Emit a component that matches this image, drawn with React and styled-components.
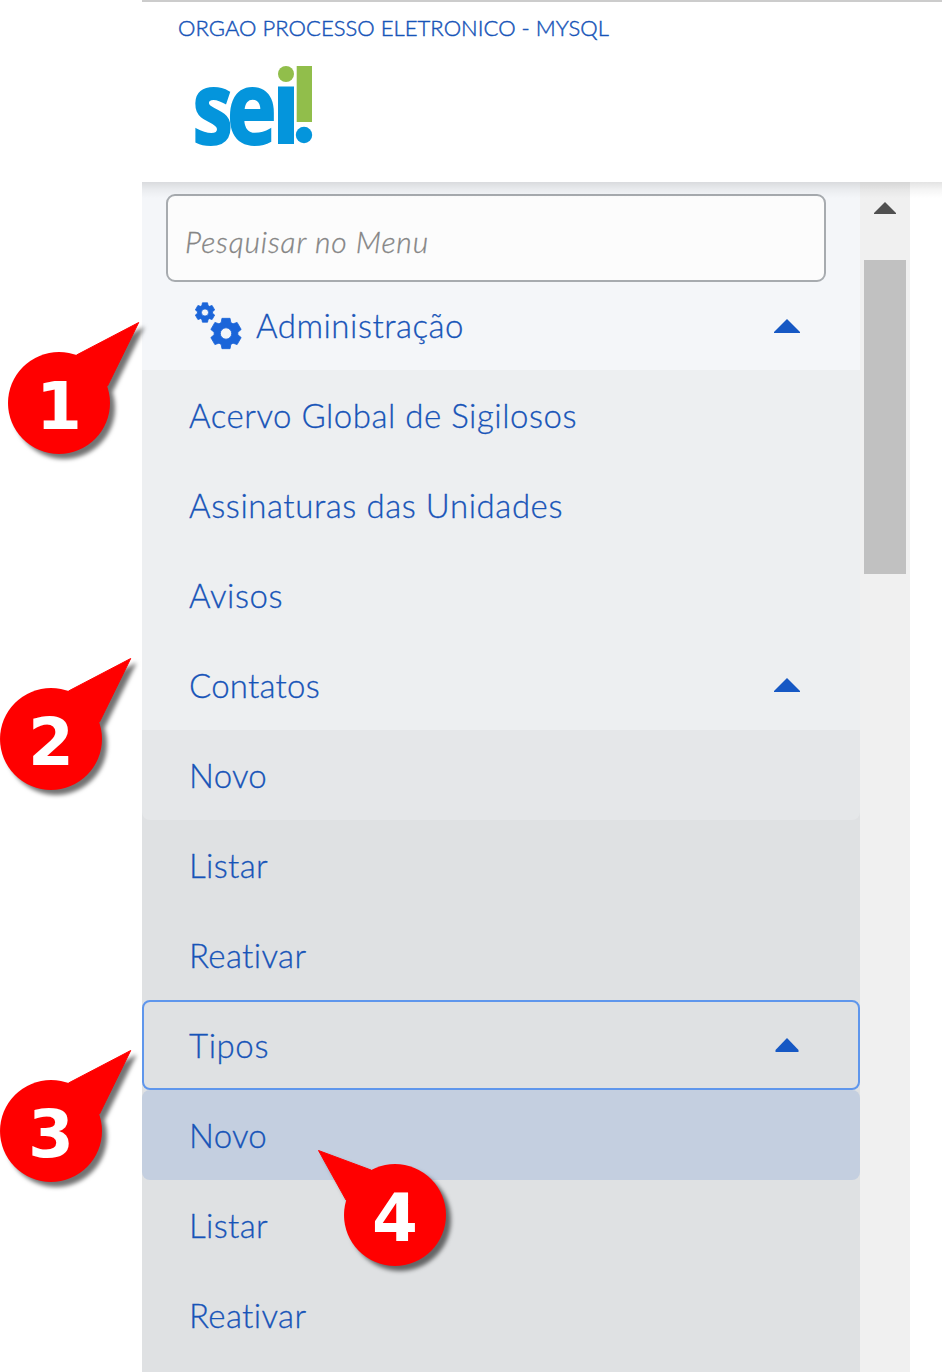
import React, { useLayoutEffect, useRef, useState } from "react";
import styled, { createGlobalStyle } from "styled-components";

const GlobalStyle = createGlobalStyle`
  * { box-sizing: border-box; }
  body { margin: 0; background: #fff; overflow: hidden; }
`;

const Page = styled.div`
  position: relative;
  display: flex;
  flex-direction: column;
  width: 942px;
  height: 1372px;
  padding-left: 142px;
  overflow: hidden;
  background: #fff;
  font-family: Lato, "Open Sans", sans-serif;
  color: #1754b8;
`;

const Header = styled.header`
  flex: none;
  height: 182px;
  border-top: 2px solid #ccc;
  padding: 13px 36px 0;
`;

const OrgName = styled.div`
  font-size: 22px;
  font-weight: 300;
  line-height: 26px;
`;

const Logo = styled.svg`
  display: block;
  margin: 19px 0 0 12px;
  overflow: visible;
`;

const Body = styled.div`
  position: relative;
  display: flex;
  flex: 1;
  min-height: 0;
`;

const HeaderShadow = styled.div`
  position: absolute;
  inset: 0 0 auto;
  height: 16px;
  background: linear-gradient(rgba(0, 0, 0, 0.11), rgba(0, 0, 0, 0.04) 50%, rgba(0, 0, 0, 0));
`;

const Menu = styled.nav`
  display: flex;
  flex-direction: column;
  width: 718px;
  padding-top: 12px;
  background: #f4f6f9;
`;

const SearchField = styled.div`
  flex: none;
  display: flex;
  align-items: center;
  height: 88px;
  margin: 0 34px 0 24px;
  padding: 6px 0 0 17px;
  border: 2px solid #a7abaf;
  border-radius: 9px;
  background: #fcfcfc;
  color: #858585;
  font-size: 30px;
  font-style: italic;
  font-weight: 300;
`;

const Group = styled.div`
  background: ${(p) => p.$bg};
`;

const LastGroup = styled(Group)`
  flex: 1;
`;

const Row = styled.div`
  display: flex;
  align-items: center;
  justify-content: space-between;
  height: ${(p) => p.$height || 90}px;
  padding: 0 ${(p) => (p.$outlined ? 58 : 60)}px 0 ${(p) => (p.$outlined ? 45 : 47)}px;
  border: ${(p) => (p.$outlined ? "2px solid #5f96ec" : "none")};
  border-radius: ${(p) => p.$radius || 0};
  background: ${(p) => p.$bg || "transparent"};
  font-size: 33px;
  font-weight: 300;
`;

const RowTitle = styled.div`
  display: flex;
  align-items: center;
  gap: 14px;
  padding-left: 5px;
`;

const Label = styled.span`
  display: inline-block;
  white-space: nowrap;
  line-height: 1.2;
  padding-top: ${(p) => p.$drop || 0}px;
  -webkit-text-stroke: ${(p) => p.$stroke || 0}px currentColor;
`;

const Track = styled.div`
  display: flex;
  flex-direction: column;
  align-items: center;
  width: 50px;
  padding-top: 20px;
  background: #f0f0f0;
`;

const Thumb = styled.div`
  width: 42px;
  height: 314px;
  margin-top: 46px;
  background: #c1c1c1;
`;

const Pin = styled.svg`
  position: absolute;
  left: ${(p) => p.$x}px;
  top: ${(p) => p.$y}px;
  overflow: visible;
  filter: drop-shadow(5px 5px 2px rgba(0, 0, 0, 0.55));
`;

/* Spreads the letters so that the label takes the given width. */
function FitLabel({ text, width, stroke = 0.3, drop = 1 }) {
  const ref = useRef(null);
  const [spacing, setSpacing] = useState(null);
  useLayoutEffect(() => {
    const natural = ref.current.getBoundingClientRect().width;
    setSpacing((width - natural) / text.length);
  }, [text, width]);
  return (
    <Label
      ref={ref}
      $stroke={stroke}
      $drop={drop}
      style={{ letterSpacing: spacing === null ? undefined : spacing }}
    >
      {text}
    </Label>
  );
}

function Caret({ narrow }) {
  return (
    <svg width="26" height="14" viewBox="0 0 26 14">
      <path d={narrow ? "M13 0 24.5 12V14H1.5V12Z" : "M13 0 26 13V14H0V13Z"} fill="#1658c4" />
    </svg>
  );
}

const gearPath = (cx, cy, r) => {
  const at = (deg, k) => {
    const a = (deg * Math.PI) / 180;
    return `${(cx + r * k * Math.cos(a)).toFixed(2)} ${(cy + r * k * Math.sin(a)).toFixed(2)}`;
  };
  const pts = [];
  for (let i = 0; i < 6; i++) {
    const d = i * 60 - 90;
    pts.push(at(d - 24, 0.76), at(d - 15, 1), at(d + 15, 1), at(d + 24, 0.76));
  }
  const h = r * 0.36;
  return `M${pts.join("L")}Z M${cx - h} ${cy}a${h} ${h} 0 1 0 ${2 * h} 0a${h} ${h} 0 1 0 ${-2 * h} 0Z`;
};

function Gears() {
  return (
    <svg width="48" height="48" viewBox="0 0 48 48">
      <g fill="#1b65d9" fillRule="evenodd" stroke="#1b65d9" strokeWidth="0.8" strokeLinejoin="round">
        <path d={gearPath(11, 10.5, 10)} />
        <path d={gearPath(32, 31.5, 15.7)} />
      </g>
    </svg>
  );
}

function SeiLogo() {
  return (
    <Logo width="124" height="92" viewBox="190 60 124 92">
      <g
        fontFamily="Open Sans, sans-serif"
        fontWeight="700"
        fontSize="100"
        fill="#0495dc"
        stroke="#0495dc"
        strokeWidth="2"
      >
        <text transform="translate(192.5 144) scale(0.81 1)">s</text>
        <text transform="translate(227 144) scale(0.84 1)">e</text>
      </g>
      <rect x="278" y="86.5" width="16" height="57.5" fill="#0495dc" />
      <circle cx="286" cy="74" r="8" fill="#91be4b" />
      <rect x="296.7" y="66" width="15.3" height="56" fill="#91be4b" />
      <circle cx="304" cy="135" r="8.2" fill="#0495dc" />
    </Logo>
  );
}

function Callout({ x, y, n, left }) {
  const tail = left ? "M-76.5 -64.5 -24 -45 0 0 -49 -15Z" : "M79.7 -80.5 17.5 -48 0 0 48.5 -17Z";
  return (
    <Pin $x={x} $y={y} width="1" height="1">
      <circle r="51" fill="#f00" />
      <path d={tail} fill="#f00" stroke="#f00" strokeLinejoin="round" />
      <text
        y="26"
        textAnchor="middle"
        fontFamily="DejaVu Sans, sans-serif"
        fontWeight="700"
        fontSize="66"
        fill="#fff"
      >
        {n}
      </text>
    </Pin>
  );
}

const adminItems = [
  ["Acervo Global de Sigilosos", 388],
  ["Assinaturas das Unidades", 374],
  ["Avisos", 94],
];

export default function App() {
  return (
    <>
      <GlobalStyle />
      <Page>
        <Header>
          <OrgName>
            <FitLabel text="ORGAO PROCESSO ELETRONICO - MYSQL" width={431} stroke={0.45} drop={0} />
          </OrgName>
          <SeiLogo />
        </Header>
        <Body>
          <Menu>
            <SearchField>
              <FitLabel text="Pesquisar no Menu" width={244} drop={0} />
            </SearchField>
            <Row $height={88}>
              <RowTitle>
                <Gears />
                <FitLabel text="Administração" width={208} drop={0} />
              </RowTitle>
              <Caret />
            </Row>
            <Group $bg="#edeff1">
              {adminItems.map(([text, width]) => (
                <Row key={text}>
                  <FitLabel text={text} width={width} />
                </Row>
              ))}
              <Row>
                <FitLabel text="Contatos" width={131} />
                <Caret />
              </Row>
            </Group>
            <LastGroup $bg="#dfe1e3">
              <Row $bg="#e5e7e9" $radius="0 0 8px 8px">
                <FitLabel text="Novo" width={78} />
              </Row>
              <Row>
                <FitLabel text="Listar" width={79} />
              </Row>
              <Row>
                <FitLabel text="Reativar" width={118} />
              </Row>
              <Row $outlined $radius="8px">
                <FitLabel text="Tipos" width={80} />
                <Caret narrow />
              </Row>
              <Row $bg="#c4cfe0" $radius="8px">
                <FitLabel text="Novo" width={78} />
              </Row>
              <Row>
                <FitLabel text="Listar" width={79} />
              </Row>
              <Row>
                <FitLabel text="Reativar" width={118} />
              </Row>
            </LastGroup>
          </Menu>
          <Track>
            <svg width="22" height="12" viewBox="0 0 22 12">
              <path d="M11 0 22 11V12H0V11Z" fill="#505050" />
            </svg>
            <Thumb />
          </Track>
          <HeaderShadow />
        </Body>
        <Callout x={59} y={403} n="1" />
        <Callout x={51} y={739} n="2" />
        <Callout x={51} y={1131} n="3" />
        <Callout x={395} y={1215} n="4" left />
      </Page>
    </>
  );
}
